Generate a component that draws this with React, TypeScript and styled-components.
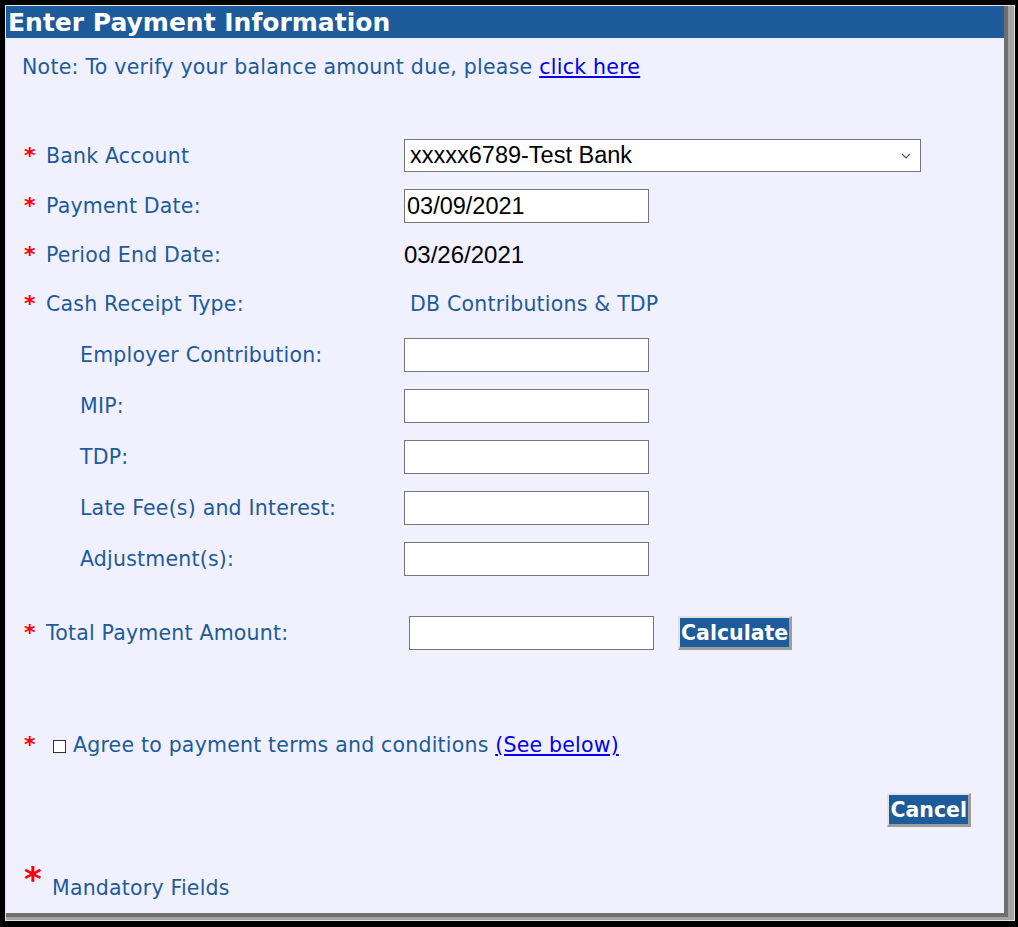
import styled, { createGlobalStyle } from "styled-components";

const GlobalStyle = createGlobalStyle`
  html, body {
    margin: 0;
    padding: 0;
    background: #000;
    height: 927px;
    overflow: hidden;
  }
  body {
    font-family: "DejaVu Sans", Verdana, sans-serif;
  }
`

const Frame = styled.div`
  margin: 5px 0 0 5px;
  width: 1005px;
  border: 1px solid #e2e2e2;
  background: #a3a3a3;
  padding: 0 3px 3px 0;
`

const Panel = styled.div`
  width: 998px;
  height: 907px;
  background: #f0f0fe;
  border-right: 4px solid #6e6e6e;
  border-bottom: 4px solid #6e6e6e;
  display: flex;
  flex-direction: column;
`

const Header = styled.div`
  height: 32px;
  line-height: 33px;
  background: #1d5b9a;
  color: #fff;
  font-weight: bold;
  font-size: 25px;
  padding-left: 2px;
  white-space: nowrap;
`

const Body = styled.div`
  padding: 0 33px 0 18px;
  color: #1d5b9a;
  font-size: 20.5px;
  letter-spacing: 0.2px;
  display: flex;
  flex-direction: column;
`

const Note = styled.div`
  margin: 17px 0 0 -2px;
  line-height: 24px;
  letter-spacing: 0.25px;
`

const Link = styled.a`
  color: #0000ee;
  text-decoration: underline;
  cursor: pointer;
`

const Form = styled.div`
  margin-top: 51px;
  display: flex;
  flex-direction: column;
`

const Row = styled.div<{ $h: number; $top?: number }>`
  height: ${p => p.$h}px;
  margin-top: ${p => p.$top ?? 0}px;
  display: grid;
  grid-template-columns: 380px 1fr;
  align-items: center;
`

const Label = styled.div<{ $sub?: boolean }>`
  display: flex;
  align-items: center;
  padding-left: ${p => (p.$sub ? 56 : 0)}px;
  line-height: 24px;
`

const Star = styled.span<{ $big?: boolean }>`
  display: inline-block;
  width: ${p => (p.$big ? 28 : 22)}px;
  color: #ff0000;
  font-weight: bold;
  font-size: ${p => (p.$big ? 34 : 22)}px;
  line-height: 1;
  letter-spacing: 0;
  margin-top: ${p => (p.$big ? -12 : 0)}px;
`

const Value = styled.div<{ $indent?: number }>`
  display: flex;
  align-items: center;
  gap: 24px;
  padding-left: ${p => p.$indent ?? 0}px;
`

const PlainValue = styled.span<{ $dark?: boolean }>`
  font-family: ${p => (p.$dark ? '"Liberation Sans", Arial, sans-serif' : 'inherit')};
  color: ${p => (p.$dark ? '#000' : 'inherit')};
  font-size: ${p => (p.$dark ? '24px' : 'inherit')};
  letter-spacing: ${p => (p.$dark ? '0' : 'inherit')};
`

const Field = styled.input`
  box-sizing: border-box;
  width: 245px;
  height: 34px;
  margin: 0;
  border: 1px solid #767676;
  background: #fff;
  padding: 0 2px;
  font-family: "Liberation Sans", Arial, sans-serif;
  font-size: 23.5px;
  color: #000;
  outline: none;
`

const SelectBox = styled.div`
  box-sizing: border-box;
  width: 517px;
  height: 33px;
  border: 1px solid #767676;
  background: #fff;
  display: flex;
  align-items: center;
  justify-content: space-between;
  padding: 0 9px 0 5px;
  font-family: "Liberation Sans", Arial, sans-serif;
  font-size: 23.5px;
  letter-spacing: 0;
  color: #000;
`

const BlueButton = styled.button`
  box-sizing: border-box;
  height: 34px;
  margin: 0;
  padding: 0 1px;
  background: #1d5b9a;
  color: #fff;
  font-family: "DejaVu Sans", Verdana, sans-serif;
  font-weight: bold;
  font-size: 20.5px;
  letter-spacing: 0;
  border-style: solid;
  border-width: 2px 3px 3px 2px;
  border-color: #e3e3e3 #9d9d9d #9d9d9d #e3e3e3;
  cursor: pointer;
`

const AgreeRow = styled.div`
  margin-top: 74px;
  height: 26px;
  display: flex;
  align-items: center;
  line-height: 24px;
`

const CheckBox = styled.span`
  box-sizing: border-box;
  width: 13px;
  height: 13px;
  border: 1px solid #333;
  background: #fff;
  margin: 2px 7px 0 7px;
`

const Actions = styled.div`
  margin-top: 35px;
  display: flex;
  justify-content: flex-end;
`

const Mandatory = styled.div`
  margin-top: 47px;
  display: flex;
  align-items: flex-start;
  line-height: 24px;
`

const MandatoryText = styled.span`
  margin-top: 2px;
`

const Chevron = () => (
  <svg width="10" height="6" viewBox="0 0 10 6">
    <path d="M1 1 L5 5 L9 1" fill="none" stroke="#555" strokeWidth="1.2" />
  </svg>
)

const subFields = [
  "Employer Contribution:",
  "MIP:",
  "TDP:",
  "Late Fee(s) and Interest:",
  "Adjustment(s):",
]

export default function App() {
  return (
    <>
      <GlobalStyle />
      <Frame>
        <Panel>
          <Header>Enter Payment Information</Header>
          <Body>
            <Note>
              Note: To verify your balance amount due, please <Link>click here</Link>
            </Note>
            <Form>
              <Row $h={51}>
                <Label><Star>*</Star>Bank Account</Label>
                <Value>
                  <SelectBox>
                    <span>xxxxx6789-Test Bank</span>
                    <Chevron />
                  </SelectBox>
                </Value>
              </Row>
              <Row $h={50}>
                <Label><Star>*</Star>Payment Date:</Label>
                <Value>
                  <Field defaultValue="03/09/2021" />
                </Value>
              </Row>
              <Row $h={48}>
                <Label><Star>*</Star>Period End Date:</Label>
                <Value>
                  <PlainValue $dark>03/26/2021</PlainValue>
                </Value>
              </Row>
              <Row $h={50}>
                <Label><Star>*</Star>Cash Receipt Type:</Label>
                <Value $indent={6}>
                  <PlainValue>DB Contributions &amp; TDP</PlainValue>
                </Value>
              </Row>
              {subFields.map(name => (
                <Row $h={51} key={name}>
                  <Label $sub>{name}</Label>
                  <Value>
                    <Field />
                  </Value>
                </Row>
              ))}
              <Row $h={50} $top={24}>
                <Label><Star>*</Star>Total Payment Amount:</Label>
                <Value $indent={5}>
                  <Field />
                  <BlueButton>Calculate</BlueButton>
                </Value>
              </Row>
            </Form>
            <AgreeRow>
              <Star>*</Star>
              <CheckBox />
              Agree to payment terms and conditions&nbsp;<Link>(See below)</Link>
            </AgreeRow>
            <Actions>
              <BlueButton>Cancel</BlueButton>
            </Actions>
            <Mandatory>
              <Star $big>*</Star>
              <MandatoryText>Mandatory Fields</MandatoryText>
            </Mandatory>
          </Body>
        </Panel>
      </Frame>
    </>
  )
}
